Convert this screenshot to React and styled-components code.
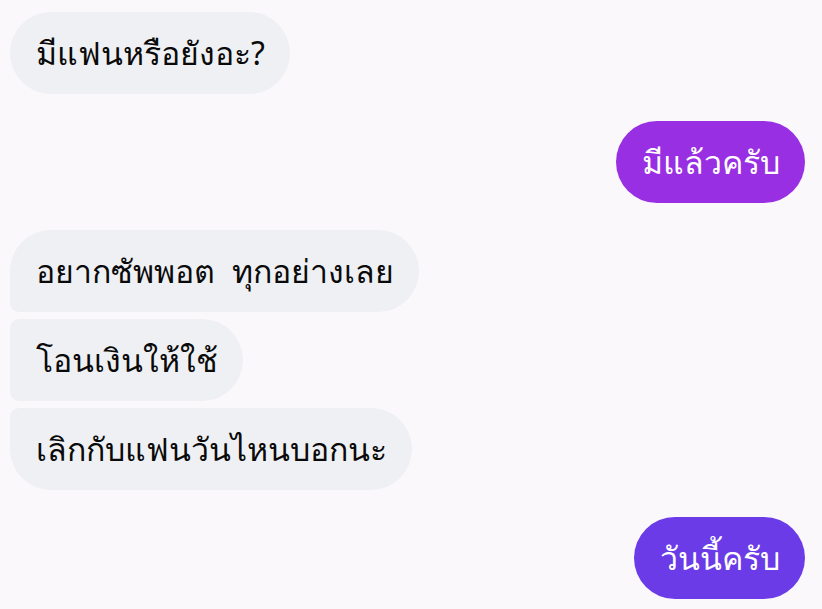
import React from 'react'
import styled, { createGlobalStyle } from 'styled-components'

const Global = createGlobalStyle`
  html, body {
    margin: 0;
    padding: 0;
    background: #fbf8fb;
  }
  body {
    font-family: "Noto Sans", "DejaVu Sans", sans-serif;
  }
`

const Thread = styled.div`
  width: 822px;
  height: 609px;
  box-sizing: border-box;
  padding: 12px 17px 0 10px;
  display: flex;
  flex-direction: column;
  gap: 27px;
  overflow: hidden;
`

const Group = styled.div`
  display: flex;
  flex-direction: column;
  align-items: ${({ mine }) => (mine ? 'flex-end' : 'flex-start')};
  gap: 7px;
`

const radius = (pos, mine) => {
  const big = '41px'
  const small = '9px'
  if (mine || pos === 'single') return big
  if (pos === 'first') return `${big} ${big} ${big} ${small}`
  if (pos === 'last') return `${small} ${big} ${big} ${big}`
  return `${small} ${big} ${big} ${small}`
}

const Bubble = styled.div`
  box-sizing: border-box;
  height: 82px;
  padding: 0 25px 0 26px;
  display: flex;
  align-items: center;
  font-size: 32px;
  line-height: 40px;
  word-spacing: 9px;
  white-space: pre;
  border-radius: ${({ pos, mine }) => radius(pos, mine)};
  background: ${({ mine, tint }) => (mine ? tint : '#eff0f3')};
  color: ${({ mine }) => (mine ? '#ffffff' : '#0a0a0a')};
`

const groups = [
  { mine: false, lines: ['มีแฟนหรือยังอะ?'] },
  { mine: true, tint: '#982fe2', lines: ['มีแล้วครับ'] },
  { mine: false, lines: ['อยากซัพพอต ทุกอย่างเลย', 'โอนเงินให้ใช้', 'เลิกกับแฟนวันไหนบอกนะ'] },
  { mine: true, tint: '#6b3be8', lines: ['วันนี้ครับ'] },
]

const position = (i, n) => {
  if (n === 1) return 'single'
  if (i === 0) return 'first'
  if (i === n - 1) return 'last'
  return 'middle'
}

export default function App() {
  return (
    <>
      <Global />
      <Thread>
        {groups.map((g, gi) => (
          <Group key={gi} mine={g.mine}>
            {g.lines.map((t, i) => (
              <Bubble key={i} mine={g.mine} tint={g.tint} pos={position(i, g.lines.length)}>
                {t}
              </Bubble>
            ))}
          </Group>
        ))}
      </Thread>
    </>
  )
}
